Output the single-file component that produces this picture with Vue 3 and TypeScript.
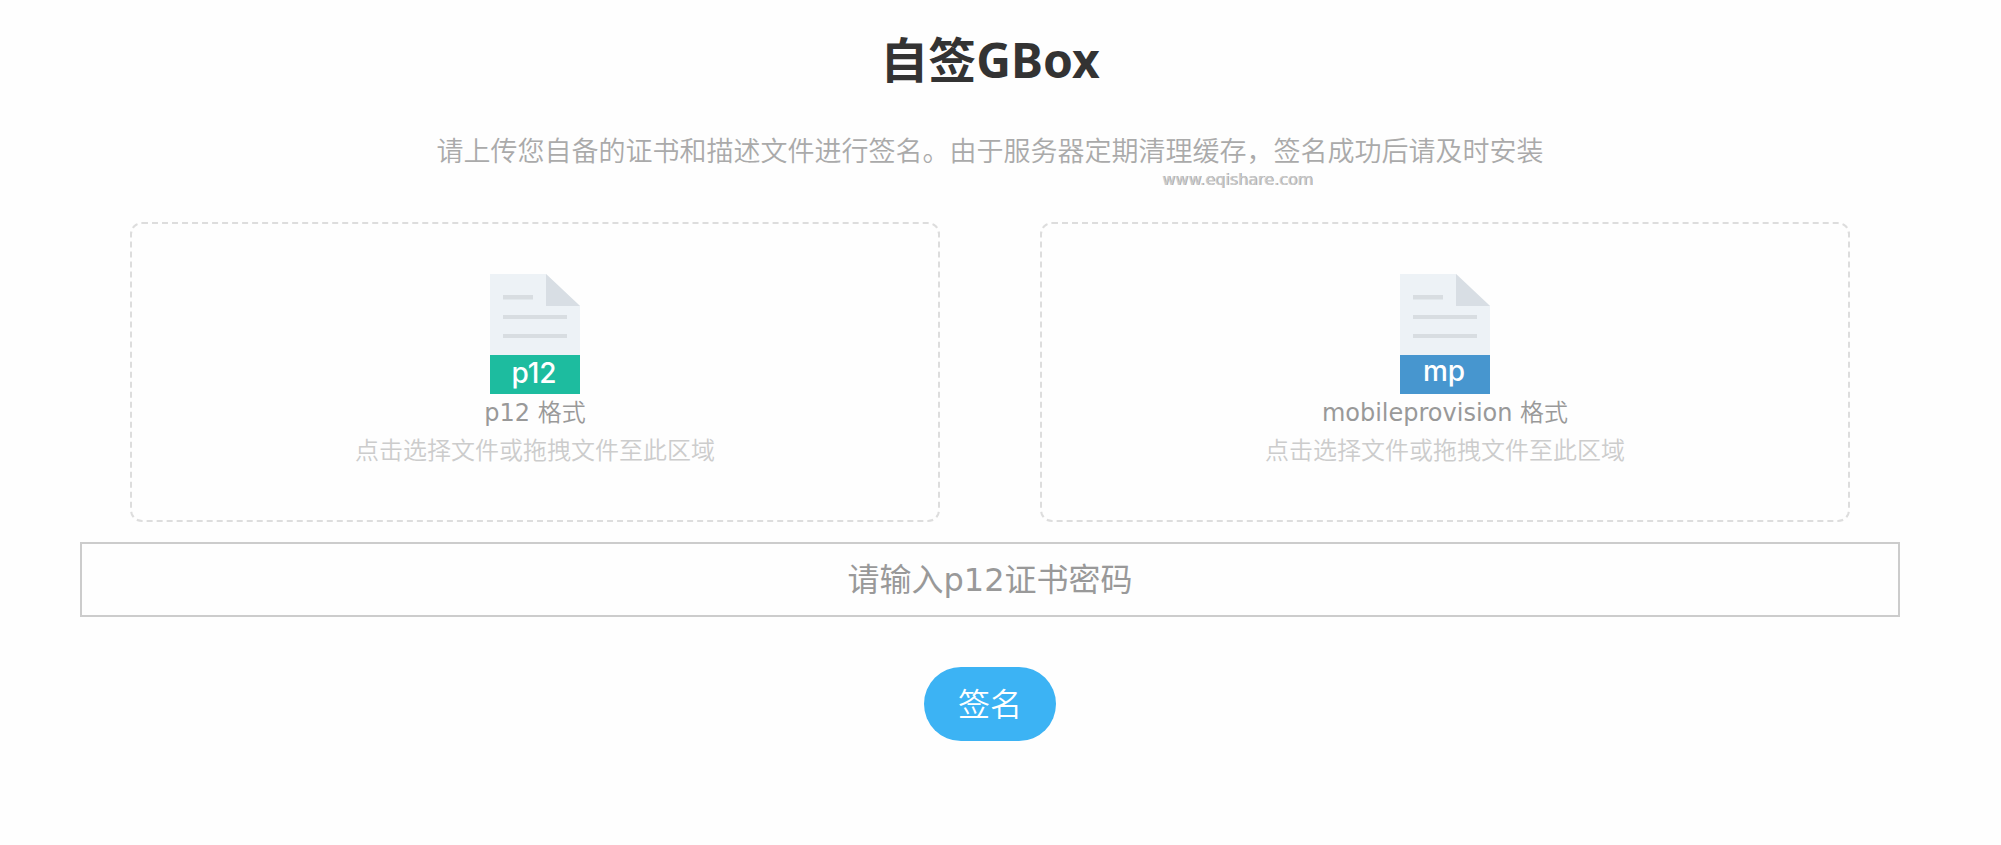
<script setup lang="ts">
import { ref } from 'vue'

interface FileSlot {
  id: string
  tag: string
  format: string
  accept: string
  color: string
  baseline: number
}

const slots: FileSlot[] = [
  { id: 'p12-file', tag: 'p12', format: 'p12', accept: '.p12', color: '#1dbc9f', baseline: 109 },
  { id: 'mp-file', tag: 'mp', format: 'mobileprovision', accept: '.mobileprovision', color: '#4796cf', baseline: 107 },
]

const password = ref('')
const files = ref<Record<string, File | undefined>>({})

function choose(id: string, event: Event) {
  files.value[id] = (event.target as HTMLInputElement).files?.[0]
}

function drop(id: string, event: DragEvent) {
  files.value[id] = event.dataTransfer?.files[0]
}
</script>

<template>
  <main class="page">
    <h1 class="title">自签GBox</h1>
    <div class="intro">
      <p class="lead">请上传您自备的证书和描述文件进行签名。由于服务器定期清理缓存，签名成功后请及时安装</p>
      <span class="watermark">www.eqishare.com</span>
    </div>

    <form class="form" @submit.prevent>
      <div class="slots">
        <label
          v-for="slot in slots"
          :key="slot.id"
          class="slot"
          :for="slot.id"
          @dragover.prevent
          @drop.prevent="drop(slot.id, $event)"
        >
          <input :id="slot.id" class="file" type="file" :accept="slot.accept" @change="choose(slot.id, $event)" />
          <svg class="icon" viewBox="0 0 90 120" aria-hidden="true">
            <path d="M0 0H56L90 32V120H0Z" fill="#edf2f6" />
            <path d="M56 0L90 32H56Z" fill="#d8dee4" />
            <path d="M13 21H43V25.500H13ZM13 41H77V45H13ZM13 60H77V64H13Z" fill="#d8dde1" />
            <rect y="81" width="90" height="39" :fill="slot.color" />
            <text class="tag" x="44" :y="slot.baseline" text-anchor="middle">{{ slot.tag }}</text>
          </svg>
          <span class="name"><span class="format">{{ slot.format }}</span> 格式</span>
          <span class="hint">点击选择文件或拖拽文件至此区域</span>
        </label>
      </div>

      <input
        v-model="password"
        class="password"
        type="password"
        placeholder="请输入p12证书密码"
        aria-label="请输入p12证书密码"
      />
      <button class="submit" type="submit">签名</button>
    </form>
  </main>
</template>

<style>
body {
  margin: 0;
  background: #fefefe;
}
</style>

<style scoped>
.page {
  box-sizing: border-box;
  padding: 24px 101px 40px 80px;
  font-family: "DejaVu Sans", "Noto Sans CJK SC", sans-serif;
  font-weight: 350;
  text-align: center;
}

.title {
  margin: 0;
  color: #333;
  font-family: "Noto Sans", "Noto Sans CJK SC", sans-serif;
  font-size: 48px;
  font-weight: 700;
  line-height: 72px;
}

.intro {
  position: relative;
  margin: 32px 0 48px;
}

.lead {
  margin: 0;
  color: #aaa;
  font-family: "Noto Sans", "Noto Sans CJK SC", sans-serif;
  font-size: 27px;
  line-height: 46px;
}

.watermark {
  position: absolute;
  top: 42px;
  left: calc(50% + 172px);
  color: #ccc;
  font-size: 16px;
  font-weight: 400;
  line-height: 20px;
  text-shadow: 1px 0 0 #aaa;
}

.form {
  display: flex;
  flex-direction: column;
  align-items: center;
}

.slots {
  display: flex;
  box-sizing: border-box;
  width: 100%;
  gap: 100px;
  padding: 0 50px;
}

.slot {
  display: flex;
  flex: 1;
  flex-direction: column;
  align-items: center;
  padding: 50px 10px;
  border: 2px dashed #ddd;
  border-radius: 12px;
  cursor: pointer;
}

.file {
  position: absolute;
  width: 1px;
  height: 1px;
  opacity: 0;
}

.icon {
  width: 90px;
  height: 120px;
}

.tag {
  fill: #fff;
  font-family: Inter, "Liberation Sans", sans-serif;
  font-size: 28px;
  font-weight: 500;
}

.name,
.hint {
  font-size: 24px;
  line-height: 38px;
}

.name {
  color: #999;
}

.format {
  font-weight: 400;
}

.hint {
  color: #ccc;
}

.password {
  box-sizing: border-box;
  width: 100%;
  height: 75px;
  margin: 20px 0 50px;
  padding: 0 20px;
  border: 2px solid #ccc;
  background: transparent;
  color: #333;
  font: inherit;
  font-size: 32px;
  font-weight: 400;
  text-align: center;
}

.password::placeholder {
  color: #999;
}

.submit {
  height: 74px;
  padding: 0 34px 4px;
  border: 0;
  border-radius: 37px;
  background: #3cb3f4;
  color: #fff;
  font: inherit;
  font-size: 32px;
  cursor: pointer;
}
</style>
